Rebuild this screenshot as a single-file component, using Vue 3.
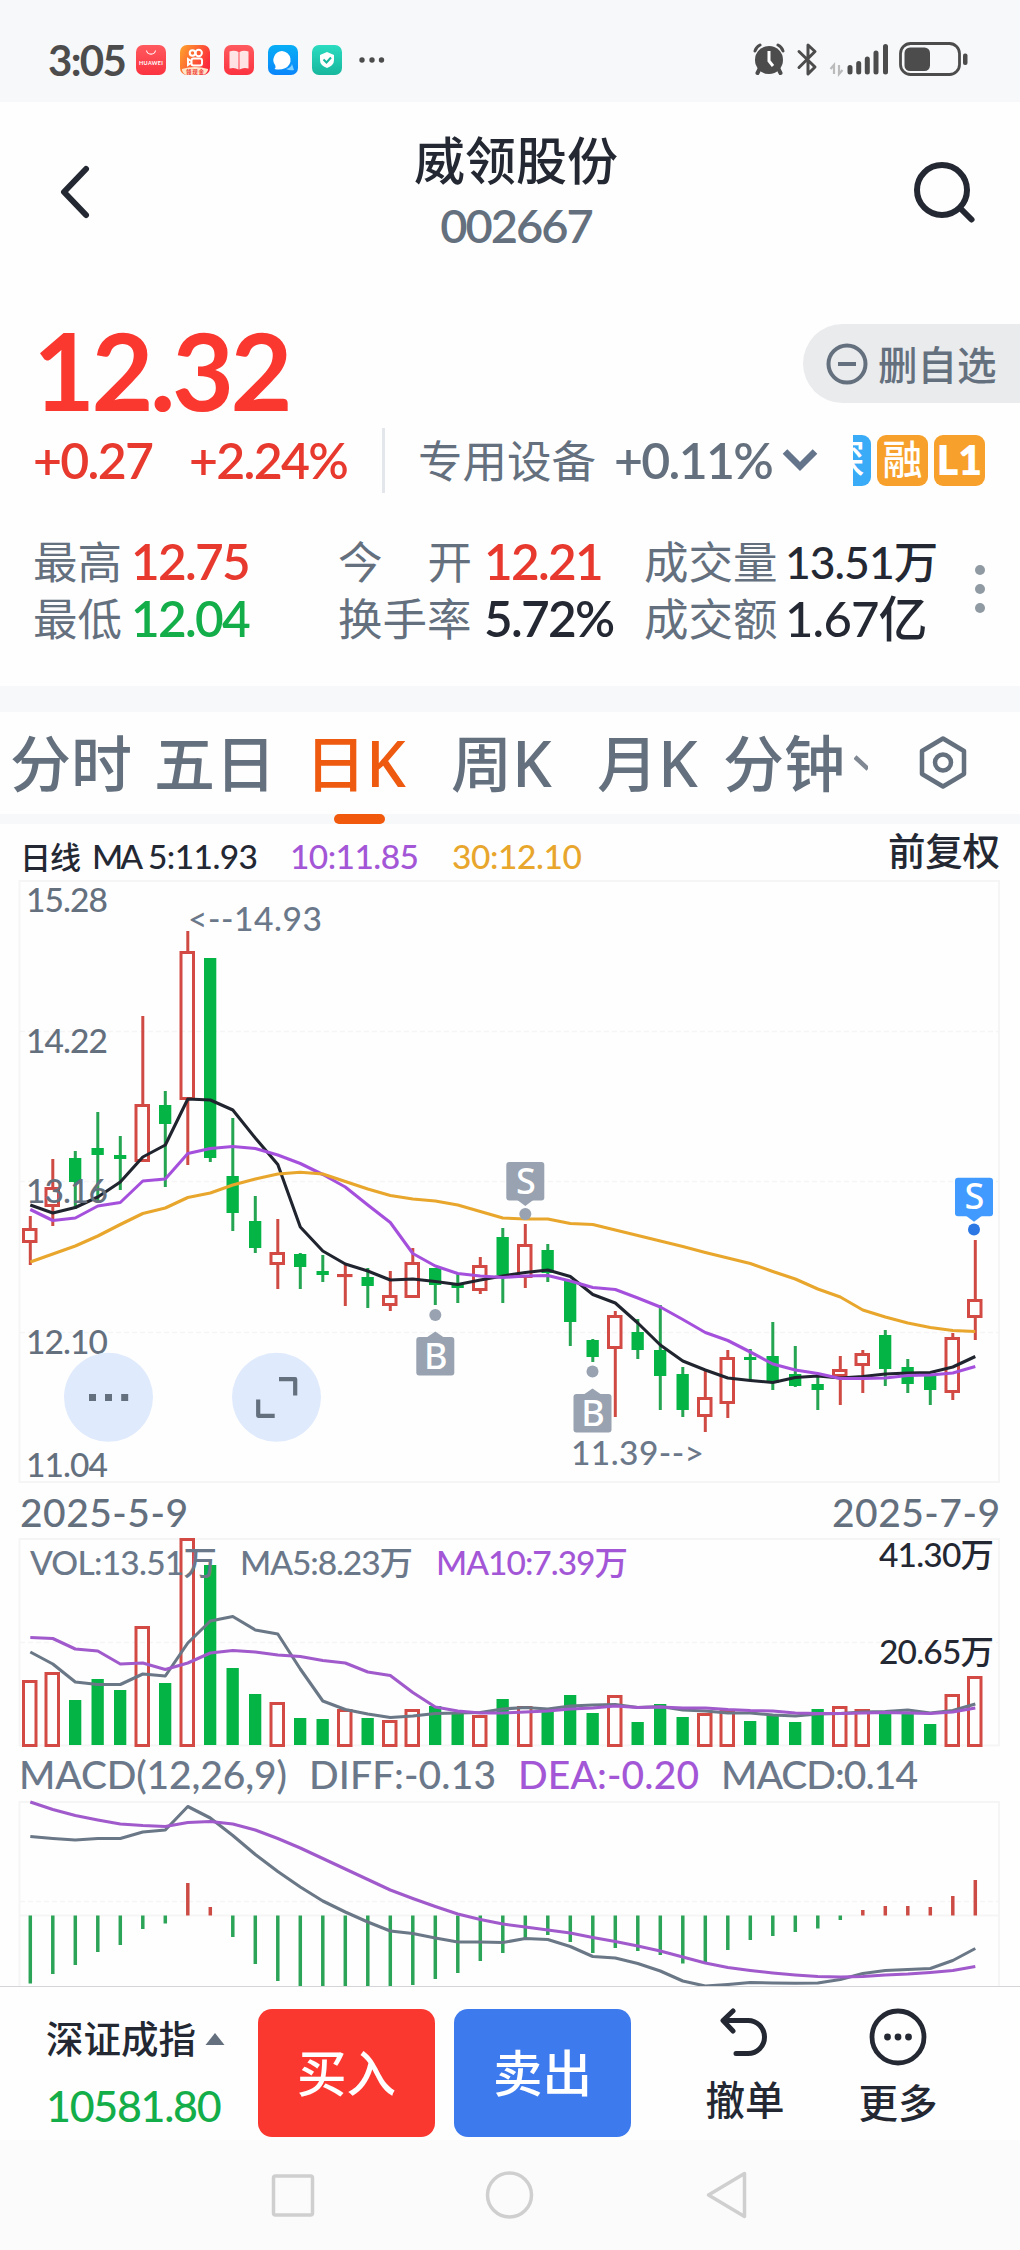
<script setup>
const STEP = 22.5
const X0 = 30.3
const cx = (i) => X0 + STEP * i

// [direction, high, bodyTop, bodyBottom, low]
const candles = [
  ['r', 1216, 1228, 1243, 1265], ['r', 1159, 1187, 1207, 1226], ['g', 1151, 1158, 1182, 1209],
  ['g', 1112, 1148, 1155, 1202], ['g', 1136, 1155, 1159, 1190], ['r', 1016, 1104, 1162, 1162],
  ['g', 1091, 1105, 1124, 1187], ['r', 931, 951, 1100, 1165], ['g', 958, 958, 1158, 1162],
  ['g', 1118, 1176, 1213, 1231], ['g', 1196, 1221, 1248, 1253], ['r', 1219, 1252, 1265, 1289],
  ['g', 1253, 1254, 1267, 1289], ['g', 1255, 1271, 1275, 1282], ['r', 1264, 1274, 1277, 1306],
  ['g', 1268, 1277, 1286, 1308], ['r', 1271, 1295, 1306, 1311], ['r', 1248, 1262, 1298, 1298],
  ['g', 1268, 1268, 1285, 1305], ['g', 1273, 1284, 1288, 1303], ['r', 1257, 1265, 1291, 1294],
  ['g', 1228, 1237, 1275, 1303], ['r', 1224, 1244, 1278, 1288], ['g', 1244, 1250, 1273, 1282],
  ['g', 1281, 1281, 1322, 1346], ['g', 1339, 1340, 1357, 1362], ['r', 1311, 1315, 1349, 1417],
  ['g', 1319, 1332, 1350, 1359], ['g', 1305, 1350, 1376, 1410], ['g', 1367, 1374, 1410, 1417],
  ['r', 1370, 1397, 1417, 1432], ['r', 1350, 1357, 1404, 1418], ['g', 1349, 1357, 1360, 1380],
  ['g', 1322, 1356, 1383, 1390], ['g', 1346, 1374, 1386, 1387], ['g', 1374, 1384, 1390, 1410],
  ['r', 1356, 1369, 1377, 1405], ['r', 1350, 1353, 1366, 1393], ['g', 1330, 1335, 1369, 1386],
  ['g', 1359, 1367, 1384, 1393], ['g', 1376, 1376, 1390, 1405], ['r', 1333, 1337, 1393, 1400],
  ['r', 1240, 1299, 1318, 1340],
]
const volumes = [
  1680, 1672, 1700, 1679, 1690, 1626, 1683, 1538, 1565, 1668, 1694, 1702, 1718, 1719, 1709, 1718,
  1720, 1709, 1706, 1713, 1715, 1699, 1706, 1711, 1695, 1713, 1695, 1722, 1704, 1717, 1713, 1710,
  1721, 1716, 1722, 1709, 1706, 1709, 1714, 1713, 1724, 1694, 1676,
]
const macdBars = [
  1983.5, 1974, 1965, 1952, 1945, 1929, 1923.5, 1883, 1907, 1937, 1964, 1981, 1990, 1990, 1990,
  1990, 1990, 1985, 1979, 1973, 1961, 1953, 1938, 1935, 1942, 1953, 1948, 1951, 1955, 1963.5, 1962,
  1950, 1940, 1936, 1932, 1928.5, 1920, 1910, 1906, 1906, 1907, 1896, 1880,
]
const line = (ys) => ys.map((y, i) => `${cx(i)},${y}`).join(' ')

const ma5 = line([
  1205, 1213, 1207.5, 1197, 1182, 1157, 1145, 1099, 1100, 1110, 1138, 1164.5, 1227, 1251, 1264,
  1271, 1280, 1279, 1281.5, 1284.5, 1280, 1276, 1272.5, 1270, 1276.5, 1294.5, 1303, 1323, 1345,
  1361, 1370, 1378, 1380.5, 1382.5, 1377.5, 1376, 1378, 1376.5, 1374, 1373, 1372.5, 1367, 1356.5,
])
const ma10 = line([
  1209.5, 1220.5, 1218, 1206, 1202.5, 1181, 1179, 1153.5, 1148.5, 1146.5, 1148.5, 1155, 1163.5,
  1174.5, 1187, 1205, 1222.5, 1253.5, 1266, 1273.5, 1276, 1277.5, 1276, 1275.5, 1281, 1287.5,
  1289.5, 1298, 1307, 1319.5, 1332.5, 1340.5, 1352, 1364, 1370, 1373.5, 1378.5, 1378.5, 1378,
  1375.5, 1375, 1373, 1366.5,
])
const ma30 = line([
  1262, 1254, 1246, 1236, 1224.5, 1213.5, 1208, 1197.5, 1193, 1185, 1179, 1174, 1172.3, 1174,
  1181.5, 1189, 1195.5, 1199, 1201, 1205, 1211.5, 1218, 1219, 1219, 1223.5, 1224.5, 1230, 1235.5,
  1241, 1246.5, 1252.5, 1258, 1263.5, 1271.5, 1279, 1289, 1297, 1310, 1317, 1323, 1327.5, 1330.5,
  1331.5,
])
const vol5 = line([
  1652, 1664, 1682, 1684.5, 1684.5, 1674, 1676, 1643, 1621, 1616.5, 1630, 1634, 1669, 1701, 1709.5,
  1714, 1717.5, 1716, 1713.5, 1713, 1712.5, 1709, 1707.5, 1709, 1706, 1705, 1704.5, 1707.5, 1706.5,
  1710, 1711, 1713, 1713, 1715, 1716, 1714, 1713.5, 1712, 1711.5, 1710, 1713, 1710.5, 1704,
])
const vol10 = line([
  1637.5, 1638.5, 1649, 1651, 1664, 1663, 1669.5, 1663, 1653, 1650.5, 1652, 1655, 1656.5, 1660.5,
  1663, 1672, 1675.5, 1692.5, 1707, 1711, 1713, 1713, 1712, 1711, 1709, 1708, 1706, 1707.5, 1707,
  1708, 1708, 1709.5, 1710.5, 1711, 1713, 1713.5, 1713.5, 1713, 1712.5, 1713, 1713.5, 1712, 1708,
])
const diff = line([
  1836.5, 1838.5, 1840, 1838.5, 1838.5, 1832, 1830, 1806.5, 1818, 1835.5, 1854.5, 1871.5, 1887,
  1901, 1912, 1922, 1931, 1933.5, 1938, 1942, 1942, 1942.5, 1938.5, 1939.5, 1946.5, 1956.5, 1958,
  1963.5, 1971, 1981, 1986, 1984.5, 1982.5, 1983, 1983.3, 1983, 1979.5, 1973.5, 1970.5, 1969.5,
  1968.5, 1960.5, 1948.5,
])
const dea = line([
  1802, 1809.5, 1815.5, 1820, 1824, 1825.5, 1826.5, 1822.5, 1821.5, 1824, 1830, 1838.5, 1848,
  1858.5, 1869, 1879.5, 1890, 1898.5, 1906.5, 1914, 1919.5, 1924, 1927, 1930, 1933, 1937.5, 1941.5,
  1946, 1951, 1957, 1963, 1967.5, 1970.5, 1973, 1975, 1976.5, 1977, 1976.5, 1975, 1974, 1972.5,
  1970.5, 1966.5,
])

const priceLabels = [
  ['15.28', 912], ['14.22', 1053], ['13.16', 1203], ['12.10', 1354], ['11.04', 1476.5],
]
// [letter, centre x, box top, dot y, tone]
const marks = [
  ['S', 525.3, 1162, 1214, 'gray'], ['B', 435.3, 1337, 1315, 'gray'],
  ['B', 592.5, 1394, 1371.5, 'gray'], ['S', 974, 1177.7, 1229.5, 'blue'],
]
const tip = ([k, x, y]) =>
  k === 'S' ? `${x - 8},${y + 38} ${x + 8},${y + 38} ${x},${y + 44}` : `${x - 8},${y} ${x + 8},${y} ${x},${y - 5.5}`
</script>

<template>
  <main class="app">
    <section class="status">
      <span class="clock">3:05</span>
      <div class="apps">
        <svg viewBox="0 0 30 30"><defs><linearGradient id="h" x2="0" y2="1"><stop stop-color="#ff5a5f"/><stop offset="1" stop-color="#fb3340"/></linearGradient></defs><rect width="30" height="30" rx="7" fill="url(#h)"/><path d="M10.5 5.500a4.600 4.600 0 0 0 9 0" fill="none" stroke="#fff" stroke-width="1.100"/><text x="3" y="19.500" class="tiny" textLength="24">HUAWEI</text></svg>
        <svg viewBox="0 0 30 30"><defs><linearGradient id="k" x2="1" y2=".5"><stop stop-color="#ffa62b"/><stop offset="1" stop-color="#fb2b3c"/></linearGradient></defs><rect width="30" height="30" rx="7" fill="url(#k)"/><g fill="none" stroke="#fff" stroke-width="2"><circle cx="12.500" cy="8" r="2.800"/><circle cx="18.700" cy="8" r="3.200"/><rect x="11.500" y="13.500" width="10.500" height="7" rx="2"/><path d="M11 16l-3-2v6l3-2"/></g><path d="M2 24q13-4 26 0v1q-2 5-6 5H8q-5 0-6-5z" fill="#ffe6c8"/><text x="6" y="29" class="tiny red" textLength="18">领现金</text></svg>
        <svg viewBox="0 0 30 30"><rect width="30" height="30" rx="7" fill="url(#h)"/><path d="M5.500 6.500q5-1.500 9 .5v17.500q-4-2.500-9-1zM24.500 6.500q-5-1.500-9 .5v17.500q4-2.500 9-1z" fill="#fff" opacity=".85"/></svg>
        <svg viewBox="0 0 30 30"><defs><linearGradient id="m" x2="0" y2="1"><stop stop-color="#08aef5"/><stop offset="1" stop-color="#0a86fb"/></linearGradient></defs><rect width="30" height="30" rx="7" fill="url(#m)"/><path d="M14 6a9 9 0 0 1 3 17.300q-5 2-10.500.7 1.700-1.500.8-3.500A9 9 0 0 1 14 6z" fill="#fff"/><path d="M18 24q5-1 6-5l2 6q-4 1-8-1z" fill="#7fd0ff"/></svg>
        <svg viewBox="0 0 30 30"><defs><linearGradient id="s" x2="0" y2="1"><stop stop-color="#2bdcc0"/><stop offset="1" stop-color="#17b79d"/></linearGradient></defs><rect width="30" height="30" rx="7" fill="url(#s)"/><path d="M15 7l7 3v5q0 5.500-7 8-7-2.500-7-8v-5z" fill="#fff"/><path d="M11.500 14.500l3 3 4.500-5" fill="none" stroke="#17b79d" stroke-width="2"/></svg>
      </div>
      <svg class="more-dots" viewBox="0 0 26 6"><g fill="#4c4c4c"><circle cx="3" cy="3" r="2.700"/><circle cx="13" cy="3" r="2.700"/><circle cx="22.500" cy="3" r="2.700"/></g></svg>
      <svg class="sys" viewBox="750 40 220 40">
        <g fill="none" stroke="#4c4c4c" stroke-linecap="round">
          <path d="M755 51q1-4 5-6M783 51q-1-4-5-6" stroke-width="3"/>
          <path d="M760 68l-2.500 5M778 68l2.500 5" stroke-width="4"/>
          <path d="M799 51.500L815 67l-7 7V45l7 6.500L799 67.500" stroke-width="3" stroke-linejoin="round"/>
        </g>
        <circle cx="769" cy="60" r="14" fill="#4c4c4c"/>
        <path d="M769 51v10l4 5" fill="none" stroke="#fff" stroke-width="3"/>
        <path d="M834 74v-9l-3.500 4M839 65v9l3.500-4" fill="none" stroke="#bbb" stroke-width="2.200"/>
        <g stroke="#4c4c4c" stroke-width="5" stroke-linecap="round"><path d="M850 67.500v4.500M858.700 63.500v8.500M867.300 59v13M876 53v19M885.500 46.500v25.500"/></g>
        <rect x="900.500" y="43.500" width="59" height="31" rx="10" fill="none" stroke="#4c4c4c" stroke-width="2.800"/>
        <rect x="904.500" y="47.500" width="25.500" height="23.500" rx="5.500" fill="#4c4c4c"/>
        <rect x="963" y="53.500" width="4.500" height="11.500" rx="2" fill="#4c4c4c"/>
      </svg>
    </section>

    <header class="head">
      <svg class="back" viewBox="0 0 36 60"><path d="M30 7L8 30l22 23" fill="none" stroke="#232833" stroke-width="6" stroke-linecap="round" stroke-linejoin="round"/></svg>
      <div class="title"><h1>威领股份</h1><p>002667</p></div>
      <svg class="search" viewBox="0 0 64 64"><g fill="none" stroke="#232833" stroke-width="6" stroke-linecap="round"><circle cx="30" cy="30" r="25"/><path d="M49 49l10.500 10.500"/></g></svg>
    </header>

    <section class="quote">
      <div class="top">
        <strong class="price">12.32</strong>
        <button class="remove"><svg viewBox="0 0 44 44"><g fill="none" stroke="#64707e" stroke-width="4"><circle cx="22" cy="22" r="18.500"/><path d="M13 22h18"/></g></svg><span>删自选</span></button>
      </div>
      <div class="change">
        <span class="num up c1">+0.27</span><span class="num up c2">+2.24%</span>
        <i class="bar"></i>
        <span class="sector">专用设备</span><span class="num c3">+0.11%</span>
        <svg class="chev" viewBox="0 0 36 24"><path d="M3 3.500l15 15 15-15" fill="none" stroke="#64748b" stroke-width="6.500"/></svg>
        <div class="tags"><b class="tag blue"><span>深</span></b><b class="tag">融</b><b class="tag l1">L1</b></div>
      </div>
      <div class="stats">
        <dl><dt>最高</dt><dd class="up">12.75</dd><dt>最低</dt><dd class="down">12.04</dd></dl>
        <dl><dt class="just"><span>今</span><span>开</span></dt><dd class="up">12.21</dd><dt>换手率</dt><dd>5.72%</dd></dl>
        <dl><dt>成交量</dt><dd class="small">13.51万</dd><dt>成交额</dt><dd class="amount">1.67亿</dd></dl>
        <svg viewBox="0 0 12 50"><g fill="#8f9aa3"><circle cx="6" cy="6" r="5"/><circle cx="6" cy="25" r="5"/><circle cx="6" cy="44" r="5"/></g></svg>
      </div>
    </section>

    <nav class="tabs">
      <a>分时</a><a>五日</a><a class="on">日<i>K</i></a><a>周<i>K</i></a><a>月<i>K</i></a><a>分钟</a>
      <svg class="tick" viewBox="0 0 14 18"><path d="M1 3l13 12" stroke="#7f8893" stroke-width="4.500"/></svg>
      <svg class="hex" viewBox="0 0 52 56"><g fill="none" stroke="#64707e" stroke-width="4.500" stroke-linejoin="round"><path d="M26 3.500l21 12.500v23L26 51.500 5 39v-23z"/><circle cx="26" cy="27.500" r="8"/></g></svg>
    </nav>
    <div class="strip"><i></i></div>

    <svg class="chart" width="1020" height="1162" viewBox="0 824 1020 1162">
      <g class="n33">
        <text x="20" y="869" class="dark cjk" font-size="31" textLength="61">日线</text>
        <text x="92" y="869" class="dark" textLength="51">MA</text>
        <text x="148" y="869" class="dark" textLength="110">5:11.93</text>
        <text x="290" y="869" class="purple" textLength="129">10:11.85</text>
        <text x="452" y="869" class="orange" textLength="130">30:12.10</text>
        <text x="888" y="865" class="dark cjk wide" textLength="112">前复权</text>
      </g>

      <g class="frame">
        <rect x="19.500" y="881" width="979.500" height="601"/>
        <path class="dash" d="M20 1031.500H999M20 1181.500H999M20 1332.500H999"/>
        <rect x="19.500" y="1539" width="979.500" height="206.500"/>
        <path class="dash" d="M20 1642.500H999"/>
        <path d="M19.500 1990V1802H999V1990M20 1915.500H999"/>
        <path class="dash" d="M20 1901.500H999"/>
      </g>

      <g v-for="(c, i) in candles" :key="'c' + i" :class="c[0]">
        <path :d="`M${cx(i)} ${c[1]}V${c[2]}M${cx(i)} ${c[3]}V${c[4]}`" class="wick"/>
        <rect v-if="c[0] === 'r'" :x="cx(i) - 6.800" :y="c[2] + 1.500" width="12.500" :height="Math.max(c[3] - c[2] - 3, 0.1)" class="body"/>
        <rect v-else :x="cx(i) - 6.300" :y="c[2]" width="12.300" :height="c[3] - c[2]" class="body"/>
      </g>
      <g class="curve">
        <polyline :points="ma5" stroke="#20242e"/>
        <polyline :points="ma10" stroke="#a550dc"/>
        <polyline :points="ma30" stroke="#e8a62c"/>
      </g>
      <g class="n33 mute"><text v-for="p in priceLabels" :key="p[0]" x="26" :y="p[1]" textLength="82">{{ p[0] }}</text></g>
      <g class="n33 slate"><text x="188" y="930.700" textLength="134">&lt;--14.93</text><text x="571" y="1464.700" textLength="133">11.39--&gt;</text></g>
      <g v-for="(m, i) in marks" :key="'m' + i" :class="m[4]">
        <circle :cx="m[1]" :cy="m[3]" r="6" class="dot"/>
        <rect :x="m[1] - 19" :y="m[2]" width="38" height="38.500" rx="3"/>
        <polygon :points="tip(m)"/>
        <text :x="m[1] + 0.500" :y="m[2] + 31.500" text-anchor="middle">{{ m[0] }}</text>
      </g>
      <circle cx="108.500" cy="1397.300" r="44.500" fill="#dfeafc"/>
      <path d="M89 1397.500h7M105 1397.500h7M121.200 1397.500h7" stroke="#64707e" stroke-width="7"/>
      <circle cx="276.500" cy="1397.300" r="44.500" fill="#dfeafc"/>
      <path d="M279 1379.200h16.200v16.300M258.200 1399.500v16.300h16.500" fill="none" stroke="#64707e" stroke-width="4.200" stroke-linejoin="round"/>

      <g class="n39 mute"><text x="20" y="1526.700" textLength="168">2025-5-9</text><text x="832" y="1526.700" textLength="168">2025-7-9</text></g>

      <g v-for="(v, i) in volumes" :key="'v' + i" :class="candles[i][0]">
        <rect v-if="candles[i][0] === 'r'" :x="cx(i) - 6.800" :y="v + 1.500" width="12.500" :height="1745.500 - v - 1.500" class="body"/>
        <rect v-else :x="cx(i) - 6.300" :y="v" width="12.300" :height="1745 - v" class="body"/>
      </g>
      <g class="curve"><polyline :points="vol5" stroke="#6a7786"/><polyline :points="vol10" stroke="#a05acb"/></g>
      <g class="n33">
        <text x="30" y="1575" class="slate" textLength="187">VOL:13.51万</text>
        <text x="240" y="1575" class="slate" textLength="173">MA5:8.23万</text>
        <text x="436" y="1575" class="purple" textLength="192">MA10:7.39万</text>
        <text x="879" y="1567" class="dark" textLength="115">41.30万</text>
        <text x="879" y="1664" class="dark" textLength="115">20.65万</text>
      </g>

      <g class="n39 slate">
        <text x="19" y="1789" textLength="268">MACD(12,26,9)</text>
        <text x="309" y="1789" textLength="187">DIFF:-0.13</text>
        <text x="518" y="1789" class="purple" textLength="181">DEA:-0.20</text>
        <text x="721" y="1789" textLength="197">MACD:0.14</text>
      </g>
      <path v-for="(b, i) in macdBars" :key="'b' + i" :d="`M${cx(i)} 1915.500V${b}`" :stroke="b < 1915 ? '#cc4c45' : '#2ba457'" stroke-width="3.500"/>
      <g class="curve"><polyline :points="diff" stroke="#6a7786"/><polyline :points="dea" stroke="#a05acb"/></g>
    </svg>

    <footer class="trade">
      <div class="index"><div>深证成指<svg viewBox="0 0 20 12"><path d="M10 0l9.500 12H.5z" fill="#64707e"/></svg></div><p>10581.80</p></div>
      <button class="buy">买入</button>
      <button class="sell">卖出</button>
      <a class="undo"><svg viewBox="0 0 56 56"><path d="M16 5L6 14.500 16 25M6.500 14.500h24.500a16.500 16.500 0 0 1 0 33H19" fill="none" stroke="#232833" stroke-width="5" stroke-linecap="round" stroke-linejoin="round"/></svg>撤单</a>
      <a class="more"><svg viewBox="0 0 60 60"><circle cx="30" cy="30" r="26" fill="none" stroke="#232833" stroke-width="4.800"/><g fill="#232833"><circle cx="19.500" cy="30" r="3.400"/><circle cx="30" cy="30" r="3.400"/><circle cx="40.500" cy="30" r="3.400"/></g></svg>更多</a>
    </footer>
    <div class="sysnav">
      <svg viewBox="260 2160 500 70"><g fill="none" stroke="#cfcfcf" stroke-width="3.500" stroke-linejoin="round"><rect x="273.500" y="2176" width="39" height="39" rx="2"/><circle cx="509.500" cy="2195" r="22"/><path d="M708.500 2195L744.500 2173.500V2216.500z"/></g></svg>
    </div>
  </main>
</template>

<style>
body { margin: 0; background: #fefefe; }
</style>
<style scoped>
* { box-sizing: border-box; }
.app { width: 1020px; height: 2250px; overflow: hidden; background: #fefefe; color: #232833; font-family: Lato, "Noto Sans CJK SC", sans-serif; font-weight: 500; }
h1, p, dl, dd, dt { margin: 0; }
svg { display: block; flex: none; }
button { border: 0; padding: 0; font: inherit; }
.up { color: #e8392f; }
.down { color: #13ad4a; }
.status { height: 102px; background: #f7f8fa; display: flex; align-items: center; padding: 18px 50px 0 48px; }
.clock { width: 88px; font-size: 42px; line-height: 42px; letter-spacing: -1.7px; color: #4c4c4c; font-weight: 700; padding-bottom: 1px; }
.apps { display: flex; gap: 14px; }
.apps svg { width: 30px; height: 30px; }
.tiny { font: 700 5.5px Lato, "Noto Sans CJK SC", sans-serif; fill: #fff; }
.tiny.red { fill: #e33; }
.more-dots { width: 26px; margin-left: 17px; }
.sys { width: 220px; height: 40px; margin-left: auto; }
.head { height: 198px; display: flex; justify-content: space-between; padding: 24px 44px 0 56px; }
.back { width: 36px; height: 60px; margin-top: 36px; }
.search { width: 64px; height: 64px; margin-top: 34px; }
.title { text-align: center; width: 240px; margin-left: 28px; }
h1 { font: 500 51px/64px "Noto Sans CJK SC", sans-serif; }
.title p { font-size: 47px; line-height: 56px; letter-spacing: -2px; color: #64707e; margin-top: 7px; font-weight: 600; }
.quote { height: 386px; padding-left: 33px; }
.top { display: flex; justify-content: space-between; padding-top: 24px; height: 118px; }
.price { font-size: 107px; line-height: 92px; font-weight: 700; letter-spacing: -3.5px; color: #fa3830; }
.remove { width: 217px; height: 79px; border-radius: 40px 0 0 40px; background: #eaebed; color: #64707e; display: flex; align-items: center; padding-left: 22px; gap: 9px; font-size: 39.5px; }
.remove span { padding-bottom: 2px; }
.remove svg { width: 44px; height: 44px; }
.change { display: flex; align-items: center; height: 84px; color: #64707e; }
.num { font-size: 50px; letter-spacing: -1.7px; white-space: nowrap; font-weight: 600; }
.c1 { width: 156px; } .c2 { width: 193px; }
.bar { width: 3px; height: 65px; background: #e3e7ec; }
.sector { width: 196px; margin-left: 33px; font-size: 44.5px; padding-bottom: 4px; font-weight: 400; }
.c3 { width: 168px; }
.chev { width: 36px; height: 24px; }
.tags { display: flex; gap: 6px; margin-left: 35px; }
.tag { width: 51px; height: 51px; border-radius: 9px; background: #f7a12c; color: #fff; font-size: 40px; line-height: 49px; text-align: center; font-weight: 500; overflow: hidden; }
.tag.l1 { font-weight: 800; font-size: 41px; }
.tag.blue { width: 18px; background: #3aabf7; border-radius: 0 9px 9px 0; display: flex; justify-content: flex-end; padding-right: 6px; }
.stats { display: flex; padding-top: 31px; }
.stats dl { display: grid; grid-auto-rows: 57px; align-items: center; }
.stats dl:nth-child(1) { grid-template-columns: 98px 207px; }
.stats dl:nth-child(2) { grid-template-columns: 146px 160px; }
.stats dl:nth-child(3) { grid-template-columns: 141px 188px; }
.stats dt { font-size: 44.5px; line-height: 57px; color: #64707e; white-space: nowrap; font-weight: 400; }
.stats dd { font-size: 49.5px; line-height: 57px; letter-spacing: -1.7px; white-space: nowrap; font-weight: 600; }
.stats dd.small { font-size: 44.5px; letter-spacing: -1px; font-weight: 500; }
.stats dd.amount { font-size: 49px; letter-spacing: -.8px; font-weight: 500; }
.just { display: flex; justify-content: space-between; padding-right: 12px; }
.stats svg { width: 12px; height: 50px; margin-top: 31px; margin-left: 1px; }
.tabs { height: 128px; border-top: 26px solid #f7f8fa; display: flex; align-items: center; color: #64707e; font: 500 61px/90px "Noto Sans CJK SC", sans-serif; padding-left: 10px; white-space: nowrap; }
.tabs a { flex: none; padding-bottom: 4px; }
.tabs i { font: 500 63px/80px "Noto Sans", sans-serif; }
.tabs a:nth-child(1) { width: 144px; } .tabs a:nth-child(2) { width: 151px; } .tabs a:nth-child(3) { width: 146px; }
.tabs a:nth-child(4) { width: 146px; } .tabs a:nth-child(5) { width: 126px; } .tabs a:nth-child(6) { width: 131px; }
.tabs .on { color: #ee5a10; }
.tick { width: 14px; height: 18px; }
.hex { width: 52px; height: 56px; margin-left: 49px; }
.strip { height: 10px; background: #f7f8fa; padding-left: 334px; }
.strip i { display: block; width: 51px; height: 10px; border-radius: 5px; background: #f15a0c; }
.chart text { font-family: Lato, "Noto Sans CJK SC", sans-serif; font-weight: 500; }
.chart text.wide { font-size: 37.5px; }
.n33 { font-size: 33.5px; }
.n39 { font-size: 39px; }
.dark { fill: #232833; } .purple { fill: #a356d6; } .orange { fill: #e8a62c; } .mute { fill: #64707e; } .slate { fill: #6b788a; }
.slate .purple { fill: #a356d6; }
.frame { fill: none; stroke: #f5f5f6; stroke-width: 2; }
.dash { stroke-width: 1.3; stroke-dasharray: 5 3; }
.wick { stroke-width: 3; }
.r .wick { stroke: #cf4a43; } .g .wick { stroke: #25a452; }
.r .body { fill: none; stroke: #d24a43; stroke-width: 3; }
.g .body { fill: #04b545; }
.curve { fill: none; stroke-width: 3.1; stroke-linejoin: round; }
.gray { fill: #98a2b0; } .blue { fill: #419aff; } .blue .dot { fill: #2b78e4; }
.chart .gray text, .chart .blue text { fill: #fff; font-size: 36px; font-family: "Noto Sans", sans-serif; }
.trade { height: 154px; border-top: 1px solid #d3d5d8; display: flex; padding-left: 46px; }
.index { width: 212px; padding-top: 25px; }
.index div { display: flex; align-items: center; gap: 9px; font-size: 37.5px; line-height: 54px; }
.index div svg { width: 20px; height: 12px; }
.index p { color: #13ad4a; font-size: 43px; line-height: 50px; margin-top: 15px; letter-spacing: -1.3px; font-weight: 500; }
.trade button { width: 177px; height: 128px; margin-top: 22px; padding-bottom: 5px; border-radius: 14px; color: #fff; font-size: 49.5px; }
.buy { background: #fa3830; }
.trade .sell { background: #3d7aed; margin-left: 19px; }
.undo, .more { display: flex; flex-direction: column; align-items: center; font-size: 39.5px; line-height: 54px; width: 80px; }
.undo { margin-left: 74px; padding-top: 19px; }
.undo svg { width: 56px; height: 56px; margin-bottom: 11px; }
.more { margin-left: 73px; padding-top: 20px; }
.more svg { width: 60px; height: 60px; margin-bottom: 9px; }
.sysnav { height: 110px; background: #fbfbfb; padding: 20px 0 0 260px; }
.sysnav svg { width: 500px; height: 70px; }
</style>
